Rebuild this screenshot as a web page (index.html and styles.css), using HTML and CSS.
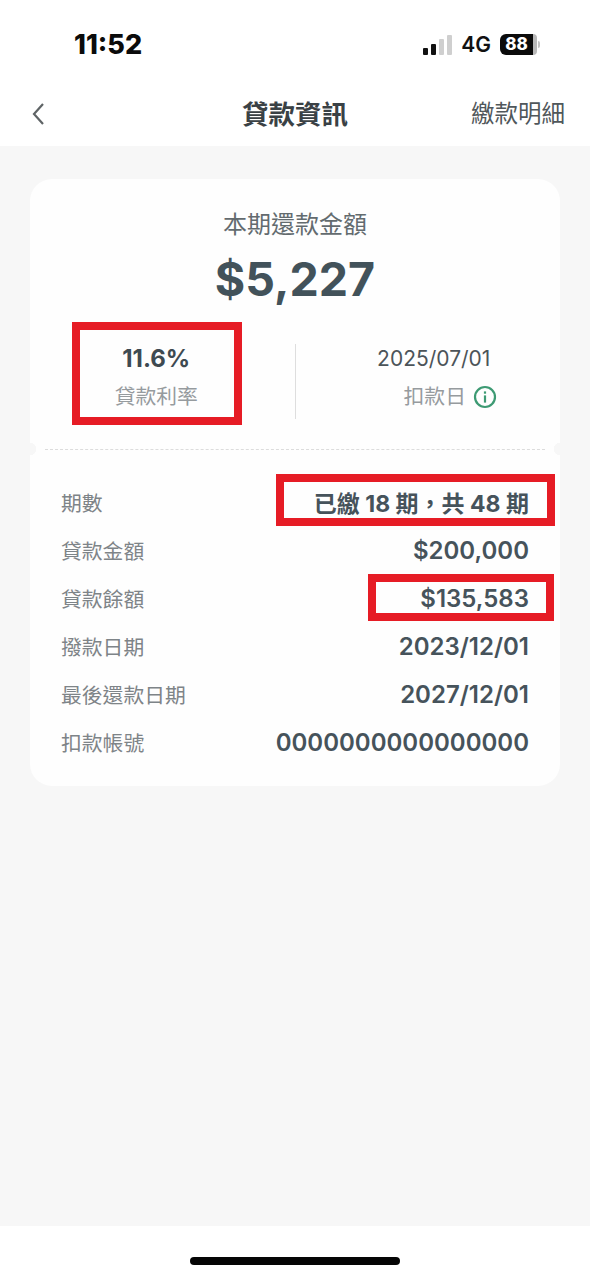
FILE: index.html
```html
<!DOCTYPE html>
<html lang="zh-Hant">
<head>
<meta charset="utf-8">
<title>貸款資訊</title>
<link rel="stylesheet" href="styles.css">
</head>
<body>
<div class="phone">
  <header class="top">
    <div class="status">
      <span class="time">11:52</span>
      <div class="status-right">
        <span class="signal"><i class="on s1"></i><i class="on s2"></i><i class="s3"></i><i class="s4"></i></span>
        <span class="net">4G</span>
        <span class="battery"><span class="battery-fill">88</span><span class="battery-rest"></span><span class="battery-cap"></span></span>
      </div>
    </div>
    <nav class="nav">
      <svg class="back" viewBox="0 0 14 24" width="14" height="24"><path d="M12 2 L3 12 L12 22" fill="none" stroke="#5f6466" stroke-width="2.2"/></svg>
      <h1 class="title">貸款資訊</h1>
      <span class="nav-link">繳款明細</span>
    </nav>
  </header>
  <main class="content">
    <section class="card card-top">
      <div class="due-label">本期還款金額</div>
      <div class="due-amount">$5,227</div>
      <div class="stats">
        <div class="stat stat-left">
          <div class="stat-strong">11.6%</div>
          <div class="stat-label">貸款利率</div>
        </div>
        <div class="stat stat-right">
          <div class="stat-date">2025/07/01</div>
          <div class="stat-label stat-label-icon">扣款日
            <svg class="info" viewBox="0 0 24 24" width="24" height="24"><circle cx="12" cy="12" r="10" fill="none" stroke="#3d9a73" stroke-width="2.2"/><rect x="10.9" y="10.4" width="2.2" height="7.2" fill="#3d9a73"/><rect x="10.9" y="6.4" width="2.2" height="2.3" fill="#3d9a73"/></svg>
          </div>
        </div>
      </div>
      <span class="mark mark-rate"></span>
    </section>
    <div class="tear"></div>
    <section class="card card-bottom">
      <div class="row"><span class="row-label">期數</span><span class="row-value row-cjk">已繳 18 期，共 48 期</span></div>
      <div class="row"><span class="row-label">貸款金額</span><span class="row-value">$200,000</span></div>
      <div class="row"><span class="row-label">貸款餘額</span><span class="row-value">$135,583</span></div>
      <div class="row"><span class="row-label">撥款日期</span><span class="row-value">2023/12/01</span></div>
      <div class="row"><span class="row-label">最後還款日期</span><span class="row-value">2027/12/01</span></div>
      <div class="row"><span class="row-label">扣款帳號</span><span class="row-value">0000000000000000</span></div>
      <span class="mark mark-term"></span>
      <span class="mark mark-balance"></span>
    </section>
  </main>
  <footer class="home"><span class="home-bar"></span></footer>
</div>
</body>
</html>
```
FILE: styles.css
```css
* { box-sizing: border-box; }
html, body { margin: 0; padding: 0; }
body {
  width: 590px;
  height: 1278px;
  overflow: hidden;
  background: #fff;
  font-family: Inter, "Noto Sans CJK TC", sans-serif;
  color: #42505a;
}
.phone { height: 1278px; display: flex; flex-direction: column; }
.top { height: 146px; background: #fff; flex: none; }
.status {
  height: 73px;
  padding: 16px 50px 0 74px;
  display: flex;
  justify-content: space-between;
  align-items: center;
}
.time { font-size: 27px; font-weight: 800; color: #0b0b0b; line-height: 30px; }
.status-right { display: flex; align-items: center; }
.signal { display: flex; align-items: flex-end; gap: 3px; height: 20px; margin-right: 9px; }
.signal i { display: block; width: 5px; background: #cfcfcf; border-radius: 1px; }
.signal .on { background: #111; }
.s1 { height: 7px; }
.s2 { height: 11px; }
.s3 { height: 16px; }
.s4 { height: 20px; }
.net { font-size: 21px; font-weight: 600; color: #111; margin-right: 9px; line-height: 24px; }
.battery { display: flex; align-items: center; height: 21px; }
.battery-fill {
  width: 33px; height: 21px;
  background: #0b0b0b;
  border-radius: 6px 0 0 6px;
  color: #fff;
  font-size: 17px;
  font-weight: 800;
  line-height: 21px;
  text-align: center;
}
.battery-rest { width: 4px; height: 21px; background: #b9b9b9; border-radius: 0 6px 6px 0; }
.battery-cap { width: 2px; height: 7px; margin-left: 1px; background: #c4c4c4; border-radius: 0 2px 2px 0; }
.nav { height: 73px; display: flex; align-items: center; padding: 9px 25px 0 31px; position: relative; justify-content: space-between; }
.back { display: block; }
.title {
  position: absolute;
  left: 0; right: 0; top: 23px;
  margin: 0;
  text-align: center;
  font-size: 26.5px;
  line-height: 36px;
  font-weight: 700;
  color: #3a4145;
}
.nav-link { font-size: 23.5px; color: #50575b; line-height: 36px; }
.content { flex: 1; background: #f7f7f7; padding: 33px 30px 0; }
.card { background: #fefefe; position: relative; }
.card-top {
  height: 264px;
  border-radius: 22px 22px 0 0;
  padding-top: 30px;
}
.due-label { text-align: center; font-size: 24px; line-height: 32px; color: #636b6f; }
.due-amount {
  text-align: center;
  font-size: 46.5px;
  font-weight: 700;
  line-height: 58px;
  margin-top: 9px;
  color: #42525a;
}
.stats { display: flex; margin-top: 36px; height: 75px; }
.stat { display: flex; flex-direction: column; align-items: center; }
.stat-left { width: 265.5px; border-right: 1px solid #dedede; padding-right: 12px; }
.stat-right { flex: 1; }
.stat-strong { font-size: 24px; font-weight: 700; line-height: 30px; color: #3e4a51; }
.stat-date { font-size: 21px; line-height: 30px; color: #4c5459; margin-left: 12px; }
.stat-label { font-size: 20.8px; line-height: 30px; color: #969b9e; margin-top: 8px; }
.stat-label-icon { display: flex; align-items: center; gap: 7px; margin-left: 45px; }
.info { display: block; }
.tear {
  height: 12px;
  position: relative;
  background:
    radial-gradient(circle at 0 50%, #f7f7f7 6px, transparent 6.5px),
    radial-gradient(circle at 100% 50%, #f7f7f7 6px, transparent 6.5px),
    #fefefe;
}
.tear::before {
  content: "";
  position: absolute;
  left: 15px; right: 15px; top: 6px;
  border-top: 1px dashed #dcdcdc;
}
.card-bottom {
  height: 331px;
  border-radius: 0 0 22px 22px;
  padding: 23px 31px 0;
}
.row { display: flex; justify-content: space-between; align-items: center; height: 48px; }
.row-label { font-size: 20.8px; color: #7e8488; }
.row-value { font-size: 24px; font-weight: 600; color: #46535b; }
.row-cjk { font-size: 23px; font-weight: 700; }
.mark { position: absolute; border: 8px solid #e61c25; }
.mark-rate { left: 42px; top: 143px; width: 170px; height: 103px; }
.mark-term { left: 246px; top: 19px; width: 279px; height: 52px; }
.mark-balance { left: 338px; top: 119px; width: 186px; height: 47px; }
.home { height: 52px; flex: none; background: #fff; display: flex; justify-content: center; padding-top: 31px; }
.home-bar { width: 210px; height: 8px; background: #050505; border-radius: 4px; }
```
